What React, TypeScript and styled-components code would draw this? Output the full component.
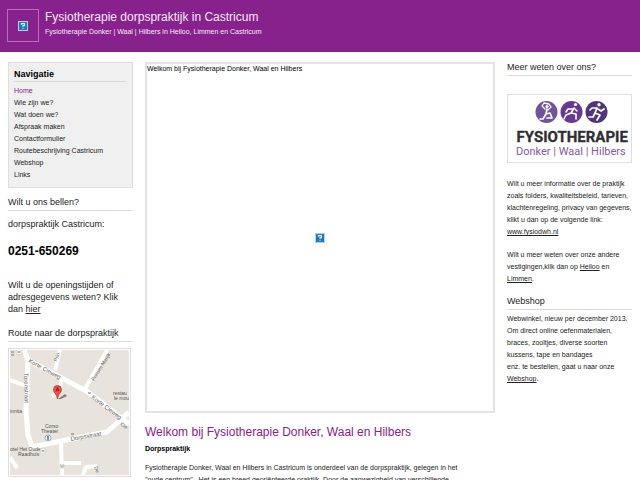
import React from "react";
import styled, { createGlobalStyle } from "styled-components";

const GlobalStyle = createGlobalStyle`
  *, *::before, *::after { box-sizing: border-box; }
  body {
    margin: 0;
    background: #fff;
    color: #222;
    font-family: "Liberation Sans", Arial, sans-serif;
    font-size: 7px;
    line-height: 12px;
  }
  h1, h2, h3, p, ul { margin: 0; padding: 0; font-weight: normal; }
  a { color: inherit; }
`;

const Viewport = styled.div`
  height: 100vh;
  overflow: hidden;
`;

const Header = styled.header`
  display: flex;
  gap: 6px;
  padding: 9px 7px 10px;
  background: #87218b;
  color: #fbe9fc;
`;

const LogoFrame = styled.div`
  display: flex;
  align-items: center;
  justify-content: center;
  width: 32px;
  height: 33px;
  border: 1px solid #b56fb8;
`;

const Title = styled.h1`
  font-size: 12px;
  line-height: 16px;
`;

const Tagline = styled.p`
  font-size: 7px;
  line-height: 14px;
`;

const Columns = styled.div`
  display: grid;
  grid-template-columns: 125fr 350fr 125fr;
  gap: 12px;
  align-items: start;
  padding: 10px 8px;
`;

const Column = styled.div`
  min-width: 0;
`;

const NavBox = styled.nav`
  padding: 4px 6px 6px 5px;
  border: 1px solid #dedede;
  background: #f0f0f0;
`;

const NavTitle = styled.h2`
  && { font-weight: bold; }
  margin-bottom: 3px;
  border-bottom: 1px solid #d8d8d8;
  color: #000;
  font-size: 9px;
  line-height: 14px;
`;

const NavList = styled.ul`
  list-style: none;
`;

const NavLink = styled.a<{ $active?: boolean }>`
  display: block;
  color: ${(p) => (p.$active ? "#87218b" : "#222")};
  text-decoration: none;
`;

const SectionTitle = styled.h2<{ $top: number }>`
  margin-top: ${(p) => p.$top}px;
  padding-bottom: 2px;
  border-bottom: 1px solid #dcdcdc;
  font-size: 9px;
  line-height: 12px;
`;

const SideTitle = styled(SectionTitle)`
  line-height: 11px;
`;

const Lead = styled.p<{ $top: number }>`
  margin-top: ${(p) => p.$top}px;
  font-size: 9px;
  line-height: 12px;
`;

const Phone = styled.p`
  && { font-weight: bold; }
  margin-top: 13px;
  color: #000;
  font-size: 12px;
  line-height: 16px;
`;

const SmallText = styled.p<{ $top: number }>`
  margin-top: ${(p) => p.$top}px;
`;

const Framed = styled.div<{ $top: number }>`
  margin-top: ${(p) => p.$top}px;
  border: 1px solid #dedede;
  padding: 1px;
  svg { display: block; width: 100%; height: auto; }
`;

const MapFrame = styled(Framed)`
  margin-right: 2px;
`;

const Photo = styled.div`
  display: flex;
  flex-direction: column;
  height: 351px;
  border: 2px solid #e4e4e4;
  color: #000;
  line-height: 10px;
`;

const PhotoCenter = styled.div`
  display: flex;
  flex: 1;
  align-items: center;
  justify-content: center;
  padding-bottom: 10px;
`;

const PageTitle = styled.h2`
  margin-top: 11px;
  color: #87218b;
  font-size: 12px;
  line-height: 16px;
`;

const Subtitle = styled.h3`
  && { font-weight: bold; }
  margin-top: 3px;
  color: #000;
  font-size: 7px;
  line-height: 12px;
`;

const MissingIcon = () => (
  <svg width="10" height="10" viewBox="0 0 10 10" aria-hidden="true">
    <rect width="10" height="10" fill="#a9d3ee" />
    <rect x="1" y="1" width="8" height="8" fill="#2878b4" />
    <path d="M3.4 3.7V2.6h3v2H5v1.2M5 6.8v1" fill="none" stroke="#d9effb" strokeWidth="1.1" />
  </svg>
);

const RouteMap = () => (
  <svg viewBox="0 0 119 125" role="img" aria-label="Kaart dorpspraktijk">
    <rect width="119" height="125" fill="#e8e4dd" />
    <g fill="none" stroke="#fff" strokeLinejoin="round">
      <path d="M14 0L18 10L78 42L119 74M18 8L16 60L18 85L22 97L51 91L97 82L119 62" strokeWidth="5" />
      <path d="M50 0L45 20M97 0L75 39M52 27L49 43L42 46M0 30L16 36M51 91L52 125M52 113H71M73 125L76 117L87 116M0 107L7 118" strokeWidth="4" />
    </g>
    <g fill="#66625e" fontFamily="Liberation Sans, Arial, sans-serif" fontSize="6">
      <text transform="translate(18 12) rotate(29)">Korte Cieweg</text>
      <text transform="translate(81 48) rotate(37)">Korte Cieweg</text>
      <text transform="translate(14 23) rotate(89)">Torenstraat</text>
      <text transform="translate(84 31) rotate(-58)" fontSize="5">Prinses Marijk</text>
      <text transform="translate(47 12) rotate(-70)" fontSize="5">Prin</text>
      <text transform="translate(61 91) rotate(-10)">Dorpsstraat</text>
      <text transform="translate(110 75) rotate(34)" fontSize="5">Cie</text>
      <text transform="translate(50 114) rotate(90)" fontSize="5">St</text>
      <text transform="translate(84 117) rotate(70)" fontSize="5">De</text>
    </g>
    <g fill="#55514d" fontFamily="Liberation Sans, Arial, sans-serif" fontSize="5">
      <text x="0" y="63">innita</text>
      <text x="35" y="78">Corso</text>
      <text x="31" y="83">Theater</text>
      <text x="0" y="101">otel Het Oude</text>
      <text x="8" y="106">Raadhuis</text>
      <text x="103" y="45">restau</text>
      <text x="104" y="50">le mou</text>
    </g>
    <circle cx="38" cy="88" r="3" fill="#f8fafc" stroke="#91adc7" />
    <path d="M38 86v4" stroke="#3971a4" strokeWidth="1.5" />
    <g fill="#faf9f7" stroke="#c7c1bb" strokeWidth=".6">
      <circle cx="33" cy="101" r="3" />
      <circle cx="9" cy="2" r="3" />
    </g>
    <path d="M31.5 101h3M7.5 2h3M1 2h3M1 5h3M61 84h3M78 43h3" stroke="#77716c" />
    <path d="M48 49L55 44L57 46L51 49Z" fill="#827d78" />
    <path d="M47.5 49C47 44 43.5 43 43.5 39.5a4 4 0 0 1 8 0C51.5 43 48 44 47.5 49Z" fill="#ef4f48" stroke="#ad302d" strokeWidth=".7" />
    <path d="M46 41.5l1.5-4 1.5 4M46.5 40h2" fill="none" stroke="#621713" strokeWidth=".7" />
  </svg>
);

const PracticeLogo = () => (
  <svg viewBox="0 0 121 65" role="img" aria-label="Fysiotherapie Donker, Waal, Hilbers">
    <circle cx="37.5" cy="16" r="11" fill="#70539b" />
    <circle cx="62.5" cy="16" r="11" fill="#673894" />
    <circle cx="87.5" cy="16" r="11" fill="#4e3679" />
    <g fill="none" stroke="#fff" strokeLinecap="round" strokeLinejoin="round">
      <path d="M36 13L33 10L35 7L40 8L42 11L39 14" strokeWidth="1.3" />
      <path d="M38 13L37 18L41 17L43 22L38 22M37 18L34 23L31 23" strokeWidth="1.7" />
      <path d="M65 12L62 17L57 19L55 23M62 17L67 18L67 23M64 13L59 13L57 16M65 12L68 15" strokeWidth="1.6" />
      <path d="M88 12L86 17L91 19L88 24M86 17L84 21L80 21M88 12L83 12L81 14M89 13L92 15L95 13" strokeWidth="1.7" />
    </g>
    <g fill="#fff">
      <circle cx="38" cy="10.5" r="1.6" />
      <circle cx="66.5" cy="8.5" r="1.6" />
      <circle cx="90" cy="8.8" r="1.7" />
    </g>
    <text x="7.5" y="46" fill="#302e32" stroke="#302e32" strokeWidth=".3" fontFamily="Roboto, sans-serif" fontWeight="700" fontSize="15">FYSIOTHERAPIE</text>
    <text x="7" y="59" fill="#805aa3" fontFamily="Roboto, sans-serif" fontSize="11">Donker | Waal | Hilbers</text>
  </svg>
);

const navItems = [
  "Home",
  "Wie zijn we?",
  "Wat doen we?",
  "Afspraak maken",
  "Contactformulier",
  "Routebeschrijving Castricum",
  "Webshop",
  "Links",
];

export default function App() {
  return (
    <Viewport>
      <GlobalStyle />
      <Header>
        <LogoFrame><MissingIcon /></LogoFrame>
        <div>
          <Title>Fysiotherapie dorpspraktijk in Castricum</Title>
          <Tagline>Fysiotherapie Donker | Waal | Hilbers in Heiloo, Limmen en Castricum</Tagline>
        </div>
      </Header>
      <Columns>
        <Column as="aside">
          <NavBox>
            <NavTitle>Navigatie</NavTitle>
            <NavList>
              {navItems.map((item, i) => (
                <li key={item}><NavLink href="#" $active={i === 0}>{item}</NavLink></li>
              ))}
            </NavList>
          </NavBox>
          <SectionTitle $top={8}>Wilt u ons bellen?</SectionTitle>
          <Lead $top={7}>dorpspraktijk Castricum:</Lead>
          <Phone>0251-650269</Phone>
          <Lead $top={20}>
            Wilt u de openingstijden of adresgegevens weten? Klik dan <a href="#">hier</a>
          </Lead>
          <SectionTitle $top={12}>Route naar de dorpspraktijk</SectionTitle>
          <MapFrame $top={6}><RouteMap /></MapFrame>
        </Column>
        <Column as="main">
          <Photo>
            Welkom bij Fysiotherapie Donker, Waal en Hilbers
            <PhotoCenter><MissingIcon /></PhotoCenter>
          </Photo>
          <PageTitle>Welkom bij Fysiotherapie Donker, Waal en Hilbers</PageTitle>
          <Subtitle>Dorpspraktijk</Subtitle>
          <SmallText $top={7}>
            Fysiotherapie Donker, Waal en Hilbers in Castricum is onderdeel van de dorpspraktijk, gelegen in het<br />
            "oude centrum".&nbsp; Het is een breed georiënteerde praktijk. Door de aanwezigheid van verschillende
          </SmallText>
        </Column>
        <Column as="aside">
          <SideTitle $top={0}>Meer weten over ons?</SideTitle>
          <Framed $top={18}><PracticeLogo /></Framed>
          <SmallText $top={15}>
            Wilt u meer informatie over de praktijk zoals folders, kwaliteitsbeleid, tarieven, klachtenregeling, privacy van gegevens, klikt u dan op de volgende link:<br />
            <a href="#">www.fysiodwh.nl</a>
          </SmallText>
          <SmallText $top={11}>
            Wilt u meer weten over onze andere vestigingen,klik dan op <a href="#">Heiloo</a> en <a href="#">Limmen</a>.
          </SmallText>
          <SideTitle $top={11}>Webshop</SideTitle>
          <SmallText $top={3}>
            Webwinkel, nieuw per december 2013.<br />
            Om direct online oefenmaterialen, braces, zooltjes, diverse soorten<br />
            kussens, tape en bandages<br />
            enz. te bestellen, gaat u naar onze <a href="#">Webshop</a>.
          </SmallText>
        </Column>
      </Columns>
    </Viewport>
  );
}
